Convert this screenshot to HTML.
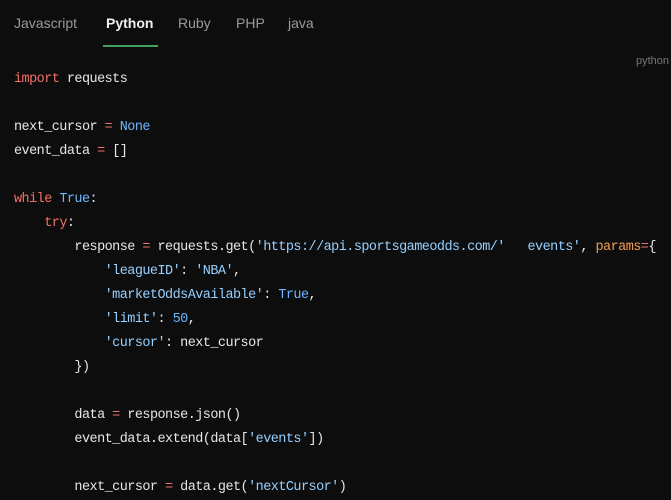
<!DOCTYPE html>
<html><head><style>
html,body{margin:0;padding:0;background:#0d0d0d;width:671px;height:497px;overflow:hidden}
.tabs{position:absolute;top:0;left:0;width:671px;height:48px;font-family:"Liberation Sans",sans-serif;font-size:14px;color:#9a9a9a}
.tabs span{position:absolute;top:15px}
.tabs .a{color:#f0f0f0;font-weight:bold}
.ul{position:absolute;left:103px;top:45px;width:55px;height:2px;background:#3fa060}
.lbl{position:absolute;right:2px;top:55px;font-family:"Liberation Sans",sans-serif;font-size:11px;color:#777}
pre{position:absolute;left:14px;top:68px;margin:0;font-family:"Liberation Mono",monospace;font-size:13.5px;letter-spacing:-0.55px;line-height:24px;color:#e6e6e6}
.k{color:#f47067}.s{color:#96d0ff}.c{color:#6cb6ff}.p{color:#f69d50}
</style></head><body>
<div class="tabs"><span style="left:14px">Javascript</span><span class="a" style="left:106px">Python</span><span style="left:178px">Ruby</span><span style="left:236px">PHP</span><span style="left:288px">java</span></div>
<div class="ul"></div>
<div class="lbl">python</div>
<pre><span class="k">import</span> requests

next_cursor <span class="k">=</span> <span class="c">None</span>
event_data <span class="k">=</span> []

<span class="k">while</span> <span class="c">True</span>:
    <span class="k">try</span>:
        response <span class="k">=</span> requests.get(<span class="s">'https://api.sportsgameodds.com/'   events'</span>, <span class="p">params</span><span class="k">=</span>{
            <span class="s">'leagueID'</span>: <span class="s">'NBA'</span>,
            <span class="s">'marketOddsAvailable'</span>: <span class="c">True</span>,
            <span class="s">'limit'</span>: <span class="c">50</span>,
            <span class="s">'cursor'</span>: next_cursor
        })

        data <span class="k">=</span> response.json()
        event_data.extend(data[<span class="s">'events'</span>])

        next_cursor <span class="k">=</span> data.get(<span class="s">'nextCursor'</span>)
</pre>
</body></html>
